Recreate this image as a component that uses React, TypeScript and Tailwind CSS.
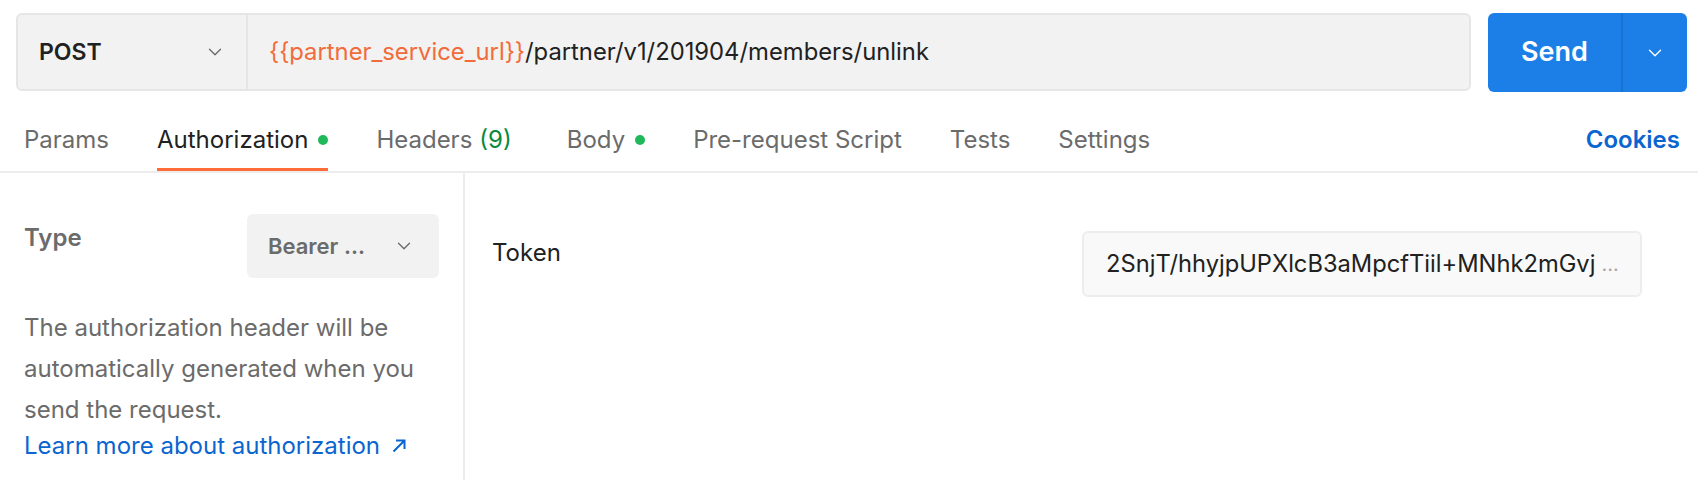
import { ChevronDown } from "lucide-react";

const tabs = [
  { label: "Params" },
  { label: "Authorization", active: true, dot: true },
  { label: "Headers", count: "(9)" },
  { label: "Body", dot: true },
  { label: "Pre-request Script" },
  { label: "Tests" },
  { label: "Settings" },
];

function ArrowUpRight() {
  return (
    <svg width="14" height="14" viewBox="0 0 14 14" fill="none" className="ml-[12px] inline-block">
      <path d="M1.5 12.5L12 2M4 1.5H12.5V10" stroke="currentColor" strokeWidth="2" />
    </svg>
  );
}

export default function App() {
  return (
    <div className="h-[480px] w-[1698px] overflow-hidden bg-white font-['Inter',sans-serif] text-[#212121]">
      {/* url row */}
      <div className="flex gap-[17px] pl-[16px] pr-[11px] pt-[13px]">
        <div className="flex h-[78px] flex-1 rounded-[6px] border-2 border-[#e6e6e6] bg-[#f2f2f2]">
          <div className="flex w-[230px] items-center justify-between border-r-2 border-[#e6e6e6] pl-[21px] pr-[20px]">
            <span className="text-[23px] font-semibold">POST</span>
            <ChevronDown className="h-[22px] w-[22px] text-[#6b6b6b]" strokeWidth={1.5} />
          </div>
          <div className="flex items-center pl-[21px] text-[23.8px]">
            <span className="text-[#f26b3a]">{"{{partner_service_url}}"}</span>
            <span>/partner/v1/201904/members/unlink</span>
          </div>
        </div>
        <div className="flex h-[79px] w-[199px] rounded-[6px] bg-[#1c7fe8] text-white">
          <div className="flex w-[135px] items-center justify-center border-r-2 border-[#1a72d0] text-[27px] font-semibold">
            Send
          </div>
          <div className="flex flex-1 items-center justify-center">
            <ChevronDown className="h-[22px] w-[22px]" strokeWidth={1.5} />
          </div>
        </div>
      </div>

      {/* tabs */}
      <div className="flex h-[81px] items-end border-b-2 border-[#ededed] pl-[24px] pr-[18px]">
        <div className="flex flex-1 gap-[48px]">
          {tabs.map((t) => (
            <div
              key={t.label}
              className={
                "flex h-[59px] items-center border-b-[3px] text-[24px] leading-[30px] " +
                (t.active ? "border-[#ff6c37] text-[#212121]" : "border-transparent text-[#6b6b6b]")
              }
            >
              {t.label}
              {t.count && <span className="ml-[7px] mr-[7px] text-[#0a8a3a]">{t.count}</span>}
              {t.dot && <span className="ml-[10px] h-[10px] w-[10px] rounded-full bg-[#1fb85a]" />}
            </div>
          ))}
        </div>
        <div className="flex h-[59px] items-center pb-[3px] text-[24px] font-semibold leading-[30px] text-[#0b65d0]">
          Cookies
        </div>
      </div>

      {/* body */}
      <div className="flex h-[307px]">
        <div className="w-[465px] border-r-2 border-[#ededed] pl-[24px] pr-[24px] pt-[41px]">
          <div className="flex items-start justify-between">
            <span className="mt-[9px] text-[24px] font-semibold leading-[30px] text-[#6b6b6b]">Type</span>
            <div className="flex h-[64px] w-[192px] items-center justify-between rounded-[6px] bg-[#f2f2f2] pl-[21px] pr-[24px]">
              <span className="text-[22px] font-semibold text-[#6b6b6b]">Bearer ...</span>
              <ChevronDown className="h-[22px] w-[22px] text-[#6b6b6b]" strokeWidth={1.5} />
            </div>
          </div>
          <p className="mt-[29px] text-[24px] leading-[41px] text-[#6b6b6b]">
            The authorization header will be automatically generated when you send the request.
          </p>
          <a className="flex items-center text-[24px] leading-[32px] text-[#0b65d0]">
            Learn more about authorization
            <ArrowUpRight />
          </a>
        </div>
        <div className="flex flex-1 items-start justify-between pl-[27px] pr-[56px] pt-[58px]">
          <span className="mt-[7px] text-[24px] leading-[30px]">Token</span>
          <div className="flex h-[66px] w-[560px] items-center rounded-[6px] border-2 border-[#ededed] bg-[#f9f9f9] pl-[22px] text-[23.7px]">
            <span>2SnjT/hhyjpUPXlcB3aMpcfTiil+MNhk2mGvj</span>
            <span className="ml-[6px] text-[20px] text-[#a6a6a6]">...</span>
          </div>
        </div>
      </div>
    </div>
  );
}
